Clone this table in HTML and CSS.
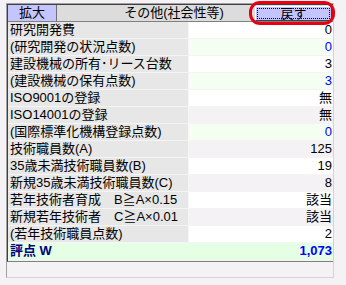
FILE: index.html
```html
<!DOCTYPE html>
<html lang="ja">
<head>
<meta charset="utf-8">
<title>その他(社会性等)</title>
<link rel="stylesheet" href="styles.css">
</head>
<body>
<div class="panel">
  <div class="sheet">
    <div class="head">
      <button class="btn zoom">拡大</button>
      <div class="title">その他(社会性等)</div>
      <button class="btn back"><span class="focus">戻す</span></button>
    </div>
    <div class="row"><div class="label">研究開発費</div><div class="val">0</div></div>
    <div class="row green"><div class="label">(研究開発の状況点数)</div><div class="val blue">0</div></div>
    <div class="row"><div class="label">建設機械の所有･リース台数</div><div class="val">3</div></div>
    <div class="row green"><div class="label">(建設機械の保有点数)</div><div class="val blue">3</div></div>
    <div class="row"><div class="label">ISO9001の登録</div><div class="val">無</div></div>
    <div class="row pink"><div class="label">ISO14001の登録</div><div class="val">無</div></div>
    <div class="row green"><div class="label">(国際標準化機構登録点数)</div><div class="val blue">0</div></div>
    <div class="row pink"><div class="label">技術職員数(A)</div><div class="val">125</div></div>
    <div class="row"><div class="label">35歳未満技術職員数(B)</div><div class="val">19</div></div>
    <div class="row pink"><div class="label">新規35歳未満技術職員数(C)</div><div class="val">8</div></div>
    <div class="row"><div class="label">若年技術者育成　B≧A×0.15</div><div class="val">該当</div></div>
    <div class="row pink"><div class="label">新規若年技術者　C≧A×0.01</div><div class="val">該当</div></div>
    <div class="row"><div class="label">(若年技術職員点数)</div><div class="val">2</div></div>
    <div class="row total"><div class="label">評点 W</div><div class="val">1,073</div></div>
  </div>
</div>
<div class="ring"></div>
</body>
</html>
```

FILE: styles.css
```css
* {
  box-sizing: border-box;
}

html,
body {
  margin: 0;
  padding: 0;
  background: #f5f2f5;
}

body {
  width: 346px;
  height: 285px;
  overflow: hidden;
  position: relative;
  font-family: "Liberation Sans", "Noto Sans CJK JP", sans-serif;
  font-size: 13px;
  color: #000;
}

/* outer frame: grey outline, dark inner edge on top/left */
.panel {
  margin: 3px 0 0 6px;
  width: 328px;
  height: 275px;
  border: 1px solid #d4d2d4;
  border-left-color: #a0a0a0;
  border-top-color: #a0a0a0;
}

.sheet {
  border-left: 1px solid #404040;
  border-top: 1px solid #404040;
  border-bottom: 1px solid #808080;
  height: 258px;
}

.head {
  display: flex;
  align-items: center;
  height: 17px;
  background: #dcdcdc;
  border-bottom: 1px solid #808080;
}

.btn {
  font: inherit;
  color: #000;
  background: #c4c4ff;
  padding: 0;
  margin: 0;
  line-height: 14px;
}

.zoom {
  width: 49px;
  height: 16px;
  border: none;
  border-right: 1px solid #707070;
}

.title {
  flex: 1;
  text-align: center;
  padding-left: 36px;
  line-height: 16px;
  white-space: nowrap;
}

.back {
  width: 77px;
  height: 15px;
  margin-right: 1px;
  border: 1px solid #404040;
  border-top-color: #ffffff;
  border-left-color: #ffffff;
  display: flex;
  padding: 1px;
}

.back .focus {
  flex: 1;
  border: 1px dotted #000;
  line-height: 9px;
  display: flex;
  align-items: center;
  justify-content: center;
}

.row {
  display: flex;
  height: 17px;
  border-bottom: 1px solid #f4f4f4;
}

.label {
  width: 181px;
  background: #e7e7e7;
  border-right: 1px solid #f6f6f6;
  padding-left: 2px;
  line-height: 16px;
  white-space: nowrap;
}

.val {
  flex: 1;
  background: #ffffff;
  text-align: right;
  padding-right: 1px;
  line-height: 16px;
}

.green .val {
  background: #f4fff2;
}

.pink .val {
  background: #f5f2f5;
}

.blue {
  color: #0000ff;
}

.total {
  border-bottom: none;
}

.total .label,
.total .val {
  background: #e4ffe4;
  font-weight: bold;
}

.total .label {
  color: #000080;
  border-right-color: #e4ffe4;
}

.total .val {
  color: #0000ff;
}

/* red marker ring around the back button */
.ring {
  position: absolute;
  left: 249px;
  top: 1px;
  width: 86px;
  height: 24px;
  border: 3px solid #e60012;
  border-radius: 11px;
}
```
